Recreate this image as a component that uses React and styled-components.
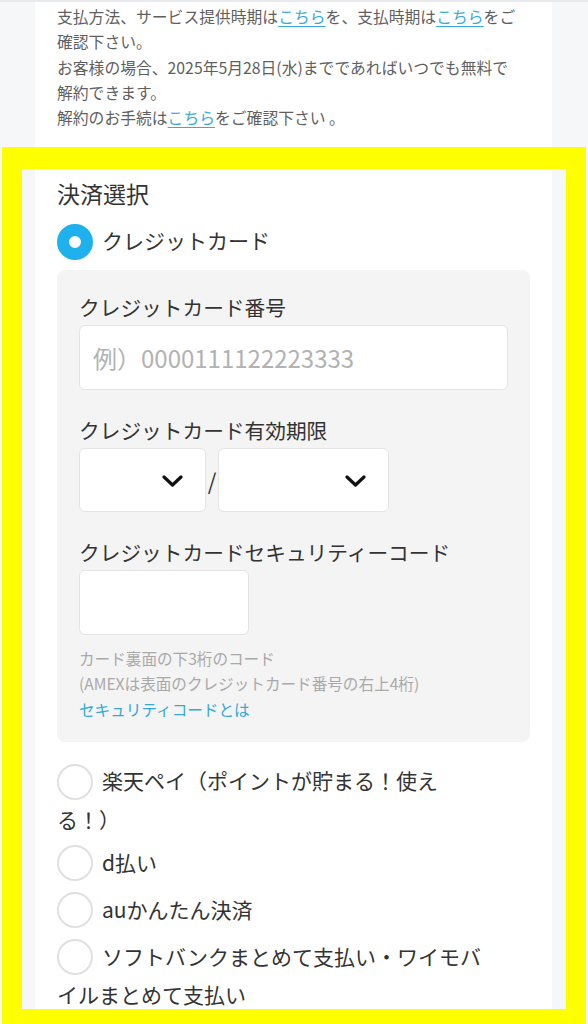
import styled, { createGlobalStyle } from 'styled-components';

const GlobalStyle = createGlobalStyle`
  html, body {
    margin: 0;
    padding: 0;
    background: #f5f7f9;
    overflow: hidden;
  }
  body {
    font-family: "Noto Sans CJK JP", "Noto Sans", sans-serif;
  }
  * {
    box-sizing: border-box;
  }
`;

const Page = styled.div`
  position: relative;
  height: 1024px;
  overflow: hidden;
  border-top: 2px solid #e7e9ec;
`;

const Panel = styled.div`
  margin: 0 36px 0 35px;
  min-height: 100%;
  padding: 2px 22px 0;
  background: #ffffff;
`;

const Notice = styled.p`
  margin: 0;
  max-width: 466px;
  font-size: 15.8px;
  line-height: 25.3px;
  color: #5f5f5f;
`;

const TextLink = styled.a`
  color: #36abd7;
  text-decoration: underline;
  text-underline-offset: 3px;
`;

const SectionTitle = styled.h2`
  margin: 46px 0 0;
  font-size: 23px;
  font-weight: 400;
  line-height: 34px;
  color: #333;
`;

const OptionList = styled.div`
  margin-top: ${(p) => p.$top || 0}px;
  max-width: 433px;
`;

const OptionItem = styled.label`
  display: block;
  margin-bottom: 9px;
  font-size: 21px;
  line-height: 34px;
  color: #333;
  text-spacing-trim: space-all;
  cursor: pointer;
`;

const RadioMark = styled.span`
  display: inline-block;
  width: 36px;
  height: 36px;
  margin-right: 9px;
  border-radius: 50%;
  vertical-align: middle;
  position: relative;
  top: -2px;
  background: #ffffff;
  border: ${(p) => (p.$checked ? '12px solid #1fb0ee' : '2px solid #e0e0e0')};
`;

const CardBox = styled.div`
  margin-top: -1px;
  padding: 22px 22px 20px;
  background: #f4f4f4;
  border-radius: 8px;
`;

const FieldLabel = styled.div`
  margin: ${(p) => (p.$first ? 0 : 25)}px 0 3px;
  font-size: 20.7px;
  line-height: 30px;
  color: #333;
`;

const TextInput = styled.input`
  display: block;
  width: ${(p) => p.$width || '100%'};
  height: 65px;
  padding: 0 13px;
  border: 1px solid #e4e4e4;
  border-radius: 6px;
  background: #fff;
  font-family: inherit;
  font-size: 24px;
  color: #333;
  outline: none;

  &::placeholder {
    color: #b2b2b2;
  }
`;

const ExpiryRow = styled.div`
  display: flex;
  align-items: center;
`;

const SelectBox = styled.div`
  position: relative;
  width: ${(p) => p.$width}px;
  height: 64px;
`;

const Select = styled.select`
  width: 100%;
  height: 100%;
  padding: 0 12px;
  border: 1px solid #e4e4e4;
  border-radius: 6px;
  background: #fff;
  appearance: none;
  font-family: inherit;
  font-size: 20px;
  outline: none;
`;

const Chevron = styled.svg`
  position: absolute;
  right: 23px;
  top: 27px;
  width: 21px;
  height: 12px;
  pointer-events: none;
`;

const Slash = styled.span`
  width: 12px;
  text-align: center;
  font-size: 22px;
  line-height: 1;
  color: #333;
`;

const HelpText = styled.div`
  margin-top: 11px;
  font-size: 15.6px;
  line-height: 25.5px;
  color: #a9a9a9;
`;

const HelpLink = styled.a`
  display: block;
  color: #32a9d8;
  text-decoration: none;
`;

const Highlight = styled.div`
  position: absolute;
  left: 2px;
  top: 145px;
  width: 584px;
  height: 882px;
  border: 20px solid #ffff00;
  border-top-width: 22px;
  pointer-events: none;
`;

function ChevronDown() {
  return (
    <Chevron viewBox="0 0 21 12">
      <polyline
        points="2,2 10.5,10 19,2"
        fill="none"
        stroke="#111"
        strokeWidth="3.2"
        strokeLinecap="round"
        strokeLinejoin="round"
      />
    </Chevron>
  );
}

const otherMethods = [
  { id: 'rakuten', label: '楽天ペイ（ポイントが貯まる！使える！）' },
  { id: 'docomo', label: 'd払い' },
  { id: 'au', label: 'auかんたん決済' },
  { id: 'softbank', label: 'ソフトバンクまとめて支払い・ワイモバイルまとめて支払い' },
];

export default function App() {
  return (
    <>
      <GlobalStyle />
      <Page>
        <Panel>
          <Notice>
            支払方法、サービス提供時期は<TextLink href="#">こちら</TextLink>を、支払時期は
            <TextLink href="#">こちら</TextLink>をご確認下さい。
            <br />
            お客様の場合、2025年5月28日(水)までであればいつでも無料で解約できます。
            <br />
            解約のお手続は<TextLink href="#">こちら</TextLink>をご確認下さい 。
          </Notice>

          <SectionTitle>決済選択</SectionTitle>
          <OptionList $top={13}>
            <OptionItem>
              <RadioMark $checked />
              クレジットカード
            </OptionItem>
          </OptionList>

          <CardBox>
            <FieldLabel $first>クレジットカード番号</FieldLabel>
            <TextInput placeholder="例）0000111122223333" />

            <FieldLabel>クレジットカード有効期限</FieldLabel>
            <ExpiryRow>
              <SelectBox $width={127}>
                <Select defaultValue="">
                  <option value=""></option>
                </Select>
                <ChevronDown />
              </SelectBox>
              <Slash>/</Slash>
              <SelectBox $width={171}>
                <Select defaultValue="">
                  <option value=""></option>
                </Select>
                <ChevronDown />
              </SelectBox>
            </ExpiryRow>

            <FieldLabel>クレジットカードセキュリティーコード</FieldLabel>
            <TextInput $width="170px" />

            <HelpText>
              カード裏面の下3桁のコード
              <br />
              (AMEXは表面のクレジットカード番号の右上4桁)
              <HelpLink href="#">セキュリティコードとは</HelpLink>
            </HelpText>
          </CardBox>

          <OptionList $top={21}>
            {otherMethods.map((m) => (
              <OptionItem key={m.id}>
                <RadioMark />
                {m.label}
              </OptionItem>
            ))}
          </OptionList>
        </Panel>
        <Highlight />
      </Page>
    </>
  );
}
